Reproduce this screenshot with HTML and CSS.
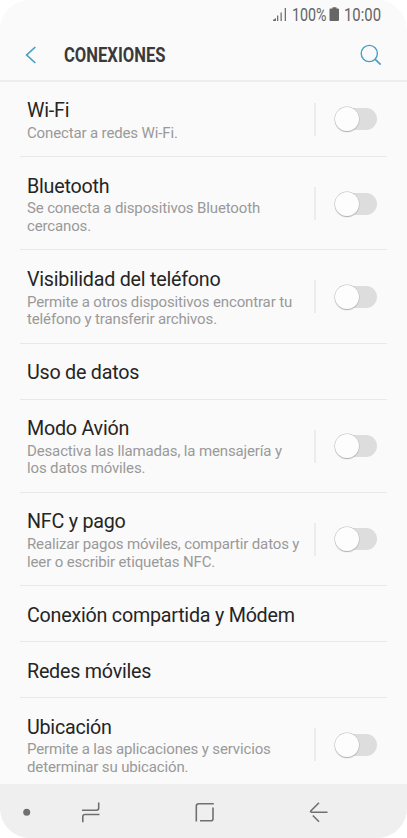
FILE: index.html
```html
<!DOCTYPE html>
<html lang="es">
<head>
<meta charset="utf-8">
<title>Conexiones</title>
<link rel="stylesheet" href="styles.css">
</head>
<body>
<div class="phone">
  <div class="status">
    <svg width="116" height="30" viewBox="0 0 116 30">
      <g fill="#707070"><path d="M0 21v-1l3-2v3z"/><rect x="4" y="15.500" width="1.300" height="5.500"/><rect x="7.500" y="12.500" width="1.300" height="8.500"/><rect x="11.700" y="8" width="1.300" height="13"/></g>
      <g class="status-text"><text x="19" y="20.700" textLength="34.500" lengthAdjust="spacingAndGlyphs">100%</text><text x="71" y="20.700" textLength="37" lengthAdjust="spacingAndGlyphs">10:00</text></g>
      <path fill="#666" d="M56.500 9.500q0-1 1-1h2v-1.300h4v1.300h1.500q1 0 1 1v10.500q0 1-1 1h-7.500q-1 0-1-1z"/>
    </svg>
  </div>
  <header class="header">
    <svg class="back" width="12" height="20" viewBox="0 0 12 20"><path d="M10.300 2 1.700 10l8.600 8" fill="none" stroke="#479fc5" stroke-width="1.700"/></svg>
    <svg class="heading" width="120" height="36" viewBox="0 0 120 36"><text x="0" y="25" textLength="101.500" lengthAdjust="spacingAndGlyphs">CONEXIONES</text></svg>
    <svg class="search" width="24" height="24" viewBox="0 0 24 24"><g fill="none" stroke="#479fc5" stroke-width="1.400"><circle cx="10.300" cy="10.500" r="8.100"/><path d="m16 16.200 5.700 5.500" stroke-width="1.700"/></g></svg>
  </header>
  <main class="list">
    <section class="row one"><div class="copy"><h2>Wi-Fi</h2><p>Conectar a redes Wi-Fi.</p></div><div class="control"><span class="toggle"></span></div></section>
    <section class="row two"><div class="copy"><h2>Bluetooth</h2><p>Se conecta a dispositivos Bluetooth<br>cercanos.</p></div><div class="control"><span class="toggle"></span></div></section>
    <section class="row two"><div class="copy"><h2>Visibilidad del teléfono</h2><p>Permite a otros dispositivos encontrar tu<br>teléfono y transferir archivos.</p></div><div class="control"><span class="toggle"></span></div></section>
    <section class="row"><div class="copy"><h2>Uso de datos</h2></div></section>
    <section class="row two"><div class="copy"><h2>Modo Avión</h2><p>Desactiva las llamadas, la mensajería y<br>los datos móviles.</p></div><div class="control"><span class="toggle"></span></div></section>
    <section class="row two"><div class="copy"><h2>NFC y pago</h2><p>Realizar pagos móviles, compartir datos y<br>leer o escribir etiquetas NFC.</p></div><div class="control"><span class="toggle"></span></div></section>
    <section class="row"><div class="copy"><h2>Conexión compartida y Módem</h2></div></section>
    <section class="row"><div class="copy"><h2>Redes móviles</h2></div></section>
    <section class="row two"><div class="copy"><h2>Ubicación</h2><p>Permite a las aplicaciones y servicios<br>determinar su ubicación.</p></div><div class="control"><span class="toggle"></span></div></section>
  </main>
  <nav class="nav">
    <svg width="407" height="54" viewBox="0 0 407 54">
      <circle cx="26.700" cy="28.300" r="3.500" fill="#707070"/>
      <g fill="none" stroke="#707070" stroke-width="1.600">
        <path d="M82 26.200h14.500q2.200 0 2.200-2.200v-5.500M99.500 30.500H85q-2.200 0-2.200 2.200v5.500"/>
        <path d="M213.800 19.800h-15q-2.500 0-2.500 2.500v15.300M213 23.500v11.300q0 2-2 2h-11"/>
        <path d="M327.500 28.300h-16.500M319 18.800l-8 8q-.800.900-.300 1.500M312.800 31.500l6.200 6.200"/>
      </g>
    </svg>
  </nav>
</div>
</body>
</html>
```

FILE: styles.css
```css
* { box-sizing: border-box; }
body { margin: 0; background: #fff; font-family: Roboto, sans-serif; }
.phone { width: 407px; height: 838px; display: flex; flex-direction: column; overflow: hidden; background: #fafafa; border-radius: 30px; }
svg { display: block; flex: none; }
.status { height: 30px; display: flex; justify-content: flex-end; padding-right: 18px; }
.status-text { font-size: 17.500px; fill: #636363; }
.header { height: 51.500px; display: flex; align-items: center; padding: .500px 24px 0 25px; border-bottom: 2px solid #eee; }
.heading { margin-left: 26.600px; margin-right: auto; font-size: 19.500px; font-weight: 700; fill: #3a3a3a; }
.list { height: 702px; overflow: hidden; padding: 0 20px; }
.row { height: 56px; display: flex; justify-content: space-between; padding: 17px 0 0 7px; border-bottom: 1px solid #e9e9e9; }
.row.one { height: 75.700px; }
.row.two { height: 93.250px; }
.copy { padding-top: .500px; }
h2 { margin: 0; font-size: 19.700px; line-height: 24px; letter-spacing: -.23px; font-weight: 400; color: #252525; white-space: nowrap; }
p { margin: 1.700px 0 0; font-size: 15px; line-height: 17.600px; letter-spacing: -.14px; color: #999; white-space: nowrap; }
.control { flex: none; align-self: flex-start; width: 73px; height: 33px; margin-top: 13px; display: flex; align-items: center; padding-left: 18px; border-left: 2px solid #ececec; }
.one .control { margin-top: 4px; }
.toggle { width: 38.500px; height: 22px; margin-left: 4px; display: flex; align-items: center; background: #ddd; border-radius: 11px; }
.toggle::before { content: ""; flex: none; width: 24px; height: 24px; margin-left: -3.500px; border-radius: 50%; background: #fdfdfd; box-shadow: 0 0 0 .500px #bbb, 0 1px 1px #aaa; }
.nav { flex: 1; background: #efefef; }
```
